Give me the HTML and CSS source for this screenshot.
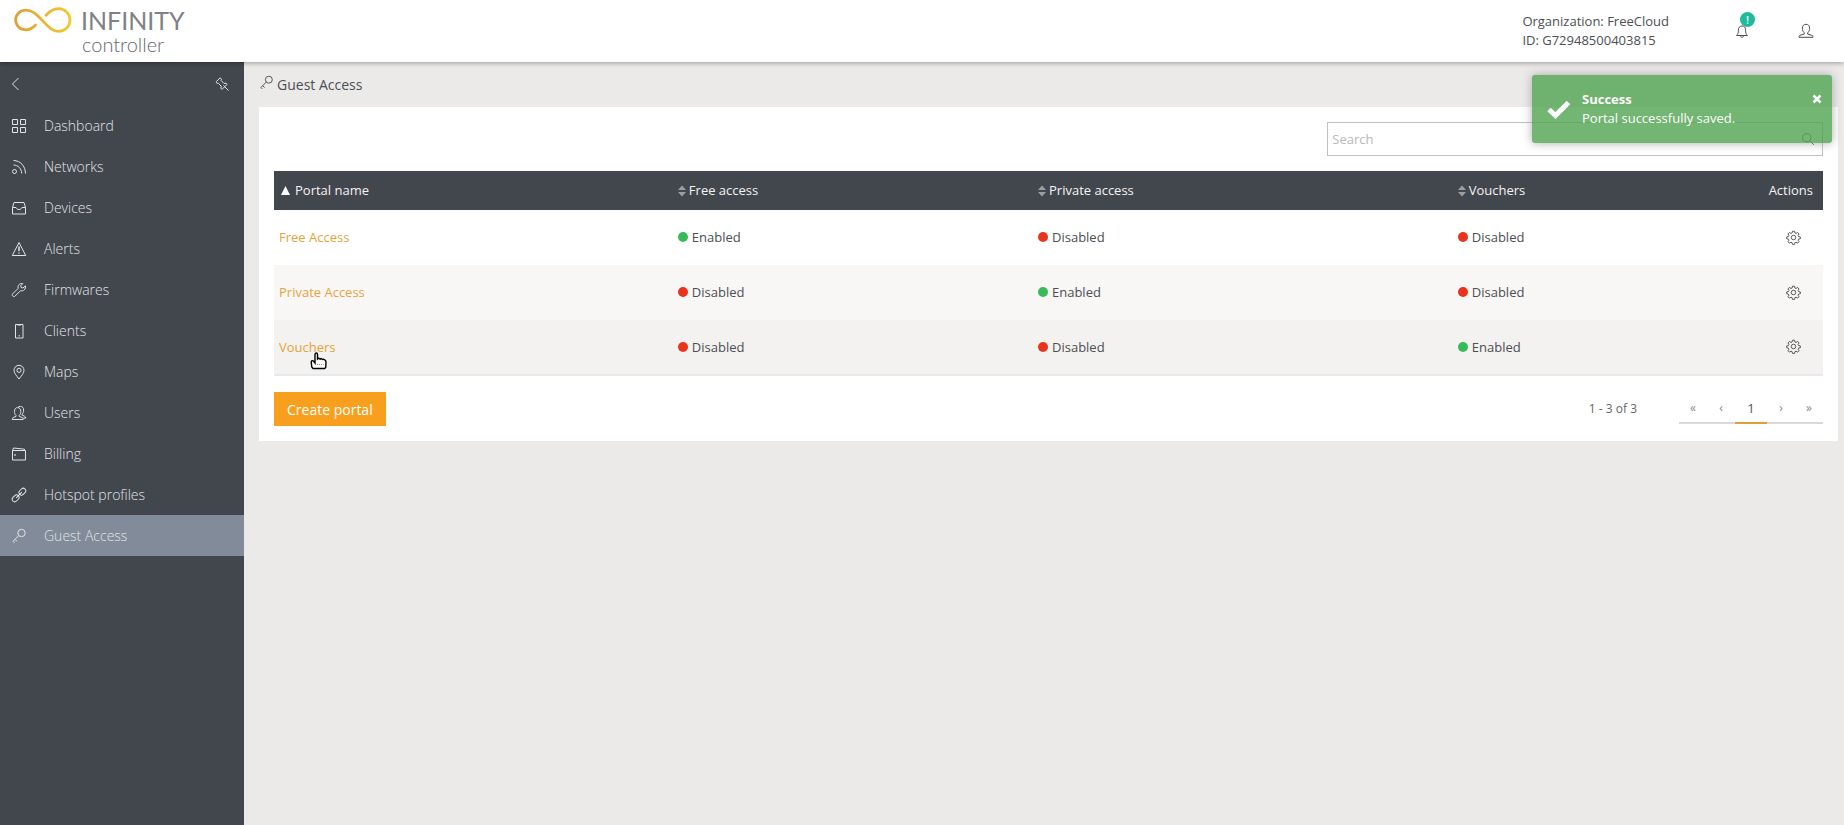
FILE: index.html
```html
<!DOCTYPE html>
<html lang="en">
<head>
<meta charset="utf-8">
<title>Infinity controller - Guest Access</title>
<link rel="stylesheet" href="styles.css">
</head>
<body>
<svg class="sprite" aria-hidden="true">
  <symbol id="key" viewBox="0 0 16 16"><circle cx="10.500" cy="5" r="3.700"/><path d="M7.800 7.600 1.800 13.500M4 11.400l2 2M2 13.300l1.500 1.500"/></symbol>
  <symbol id="gear" viewBox="0 0 16 16"><circle cx="8" cy="8" r="2.400"/><path d="M6.900 1.300h2.200l.4 1.900 1.200.5 1.700-1.100 1.500 1.600-1 1.600.5 1.200 1.900.4v1.900l-1.900.4-.5 1.200 1 1.600-1.500 1.500-1.700-1-1.200.5-.4 1.800H6.900l-.4-1.800-1.200-.5-1.700 1-1.500-1.500 1-1.600-.5-1.200-1.900-.4V7.400l1.900-.4.5-1.200-1-1.600 1.500-1.600 1.700 1.100 1.200-.5z"/></symbol>
  <symbol id="sort" viewBox="0 0 8 12"><path d="M4 0.500 8 5H0zM0 7h8L4 11.500z"/></symbol>
</svg>
<header class="topbar">
  <a class="logo" href="#" aria-label="Infinity controller">
    <svg class="logo-mark" viewBox="0 0 58 27"><defs><linearGradient id="gold" x1="0" x2="1" y1="0" y2="0"><stop offset="0" stop-color="#dda03c"/><stop offset="1" stop-color="#f2c92f"/></linearGradient></defs><path d="M21.500 18C18 21.800 15.500 22.800 12 22.800C6 22.800 1.700 18.500 1.700 13C1.700 7.500 6 3.200 12 3.200C18 3.200 22 7 26.500 11.500C33 18 37.500 24.300 44.500 24.300C51 24.300 56 19.500 56 12.800C56 6.500 51 1.700 44.500 1.700C39 1.700 35.500 4.500 32 8.200" fill="none" stroke="url(#gold)" stroke-width="2.800" stroke-linecap="round"/></svg>
    <span class="logo-text"><span class="logo-name">INFINITY</span><span class="logo-sub">controller</span></span>
  </a>
  <div class="account">
    <div class="org"><div>Organization: FreeCloud</div><div>ID: G72948500403815</div></div>
    <button class="icon-button bell" aria-label="Notifications">
      <svg class="icon" viewBox="0 0 16 16"><path d="M2.500 12.500c1.600-1.400 1.900-3 1.900-5.300C4.400 4.500 5.800 3 8 3s3.600 1.500 3.600 4.200c0 2.300.3 3.900 1.900 5.300zM6.500 12.700c0 2.300 3 2.300 3 0"/></svg>
      <span class="badge">!</span>
    </button>
    <button class="icon-button" aria-label="Profile">
      <svg class="icon" viewBox="0 0 16 16"><path d="M6.300 9.800C4.900 8.700 4.400 7.100 4.400 5.200 4.400 2.700 5.800 1.300 8 1.300s3.600 1.400 3.600 3.900c0 1.900-.5 3.500-1.900 4.600v1.300l4.200 1.200c.8.300 1.100.8 1.100 2H1c0-1.200.3-1.700 1.100-2l4.200-1.200z"/></svg>
    </button>
  </div>
</header>
<div class="layout">
  <aside class="sidebar">
    <div class="sidebar-tools">
      <button class="tool" aria-label="Collapse menu"><svg class="icon" viewBox="0 0 16 16"><path d="M10.500 2 4.500 8l6 6"/></svg></button>
      <button class="tool" aria-label="Unpin menu"><svg class="icon" viewBox="0 0 16 16"><path d="M2.200 5.700 6.200 1.800 7.500 3.300 7 4.500l3 3 2-.4 1 1.300-5 5-1.200-1.200.5-2-3-3-1 .3zM9.500 9.500l5 5"/></svg></button>
    </div>
    <nav class="nav">
      <a href="#"><svg class="icon" viewBox="0 0 16 16"><path d="M1.500 1.500h5v5h-5zM9.500 1.500h5v5h-5zM1.500 9.500h5v5h-5zM9.500 9.500h5v5h-5z"/></svg>Dashboard</a>
      <a href="#"><svg class="icon" viewBox="0 0 16 16"><circle cx="3.500" cy="12.500" r="2"/><path d="M2.500 6c4.800.2 8 3.600 8.200 8.500M2.500 1.500c7 .2 11.800 5.500 12 13"/></svg>Networks</a>
      <a href="#"><svg class="icon" viewBox="0 0 16 16"><path d="M1.500 7.500 3 2.500h10l1.500 5v6.500h-13zM1.500 7.500H5c.5 1.300 1.600 2 3 2s2.500-.7 3-2h3.500"/></svg>Devices</a>
      <a href="#"><svg class="icon" viewBox="0 0 16 16"><path d="M8 1.500 14.700 14.500H1.300zM8 5.500v4.800M8 11.500v1.500"/><path d="M8 5.500v4.500"/></svg>Alerts</a>
      <a href="#"><svg class="icon" viewBox="0 0 16 16"><path d="M11.800 1.600c-1.900-.4-3.600.3-4.400 1.800-.5 1-.5 2-.2 2.900L1.700 11.800c-.7.8-.6 1.700 0 2.300.7.700 1.600.7 2.300 0l5.600-5.400c1.300.4 2.700.2 3.700-.8 1.100-1.100 1.400-2.500 1-4L12 6l-1.900-.4-.4-1.800z"/></svg>Firmwares</a>
      <a href="#"><svg class="icon" viewBox="0 0 16 16"><path d="M4.500 1.500h7.500v13.500H4.500zM6.500 2h3.500M7.500 12.800h1.500"/></svg>Clients</a>
      <a href="#"><svg class="icon" viewBox="0 0 16 16"><path d="M8 15C5.500 11.800 3 9 3 6.300 3 3.500 5.200 1.300 8 1.300s5 2.200 5 5C13 9 10.500 11.800 8 15z"/><circle cx="8" cy="6.300" r="2.100"/></svg>Maps</a>
      <a href="#"><svg class="icon" viewBox="0 0 16 16"><path d="M5 10.400C3.900 9.500 3.500 8.200 3.500 6.400 3.500 4 4.600 2.600 6.600 2.600s3.200 1.400 3.200 3.800c0 1.800-.5 3.100-1.600 4v1l3 1.200c.8.300 1 .9 1 1.900H1.200c0-1 .2-1.600.9-1.900L5 11.400zM7 2.300c.6-.6 1.400-.9 2.400-.9 2.100 0 3.200 1.400 3.200 3.700 0 1.800-.5 3.200-1.500 4v1l2.600 1.200c.8.400 1 .9 1 1.800h-2.400"/></svg>Users</a>
      <a href="#"><svg class="icon" viewBox="0 0 16 16"><path d="M1.500 4.500h13v9.500h-13zM1.500 4.500l1-2.500 11 1.200v1.300"/><circle cx="4" cy="9" r=".5"/></svg>Billing</a>
      <a href="#"><svg class="icon" viewBox="0 0 16 16"><g transform="rotate(-45 8 8)"><rect x="-.5" y="5.500" width="7.500" height="5" rx="2.500"/><rect x="9" y="5.500" width="7.500" height="5" rx="2.500"/><path d="M4 8h8"/></g></svg>Hotspot profiles</a>
      <a class="active" href="#" aria-current="page"><svg class="icon"><use href="#key"/></svg>Guest Access</a>
    </nav>
  </aside>
  <main class="content">
    <h1 class="page-title"><svg class="icon"><use href="#key"/></svg>Guest Access</h1>
    <section class="panel">
      <div class="search">
        <input type="search" placeholder="Search" aria-label="Search">
        <svg class="icon" viewBox="0 0 16 16"><circle cx="6.500" cy="6.500" r="4.700"/><path d="M10 10l4.800 4.800"/></svg>
      </div>
      <table class="portals">
        <colgroup><col class="col-name"><col class="col-free"><col class="col-private"><col class="col-vouchers"><col></colgroup>
        <thead><tr>
          <th class="sorted" scope="col" aria-sort="ascending"><svg class="ascending" viewBox="0 0 9 9"><path d="M4.500 0 9 9H0z"/></svg>Portal name</th>
          <th scope="col"><svg class="sort"><use href="#sort"/></svg>Free access</th>
          <th scope="col"><svg class="sort"><use href="#sort"/></svg>Private access</th>
          <th scope="col"><svg class="sort"><use href="#sort"/></svg>Vouchers</th>
          <th class="actions" scope="col">Actions</th>
        </tr></thead>
        <tbody>
          <tr><td><a href="#">Free Access</a></td><td><span class="dot on"></span>Enabled</td><td><span class="dot"></span>Disabled</td><td><span class="dot"></span>Disabled</td><td class="actions"><button class="gear" aria-label="Free Access actions"><svg class="icon"><use href="#gear"/></svg></button></td></tr>
          <tr><td><a href="#">Private Access</a></td><td><span class="dot"></span>Disabled</td><td><span class="dot on"></span>Enabled</td><td><span class="dot"></span>Disabled</td><td class="actions"><button class="gear" aria-label="Private Access actions"><svg class="icon"><use href="#gear"/></svg></button></td></tr>
          <tr class="hovered"><td><a class="pointed" href="#">Vouchers<svg class="cursor" viewBox="0 0 18 18"><path d="M5 2.500c0-2 2.500-2 2.500 0V7l1-.8 1.700.9.900-.5 1.600.9.900-.3 1.900 1.300.5 1.500-.3 5.500-1 1H3l-1.200-1.500L1.200 10c.2-1.700 1.600-1.700 2.400-.7L5 11z"/><path class="cursor-lines" d="M5 12.500h8.500"/></svg></a></td><td><span class="dot"></span>Disabled</td><td><span class="dot"></span>Disabled</td><td><span class="dot on"></span>Enabled</td><td class="actions"><button class="gear" aria-label="Vouchers actions"><svg class="icon"><use href="#gear"/></svg></button></td></tr>
        </tbody>
      </table>
      <div class="panel-footer">
        <button class="create">Create portal</button>
        <div class="paging">
          <span>1 - 3 of 3</span>
          <nav class="pages" aria-label="Pages"><a href="#">«</a><a href="#">‹</a><a class="current" href="#">1</a><a href="#">›</a><a href="#">»</a></nav>
        </div>
      </div>
    </section>
  </main>
</div>
<div class="toast" role="status">
  <svg class="check" viewBox="0 0 26 20"><path d="M3 10.500 9.500 16.500 22.500 3.500"/></svg>
  <div class="toast-text"><strong>Success</strong><div>Portal successfully saved.</div></div>
  <button class="close" aria-label="Close"><svg viewBox="0 0 10 10"><path d="M1.500 1.500l7 7M8.500 1.500l-7 7"/></svg></button>
</div>
</body>
</html>
```
FILE: styles.css
```css
* { box-sizing: border-box; }

body {
  margin: 0;
  min-height: 100vh;
  display: flex;
  flex-direction: column;
  background: #ebeae9;
  color: #4b4e53;
  font: 13px/19px "Open Sans", sans-serif;
}

button {
  padding: 0;
  border: 0;
  background: none;
  color: inherit;
  font: inherit;
}

a { text-decoration: none; }

.sprite { position: absolute; width: 0; height: 0; }

.icon {
  display: block;
  flex: none;
  width: 16px;
  height: 16px;
  fill: none;
  stroke: currentColor;
  stroke-width: 1;
}

.topbar {
  position: relative;
  z-index: 1;
  display: flex;
  justify-content: space-between;
  height: 62px;
  padding: 0 24px 0 14px;
  background: #fff;
  box-shadow: 0 1px 5px rgba(0, 0, 0, .35);
}

.logo { display: flex; gap: 9px; padding-top: 7px; color: #808185; }
.logo-mark { width: 58px; height: 27px; }
.logo-text { display: flex; flex-direction: column; font-family: Lato, sans-serif; }
.logo-name { font-size: 25px; line-height: 27px; }
.logo-sub { padding-left: 1px; font-size: 20px; line-height: 20px; font-weight: 300; color: #67686c; }

.account { display: flex; align-items: center; }
.org { margin-right: 59px; }
.icon-button { position: relative; width: 28px; height: 28px; display: grid; place-items: center; }
.bell { margin-right: 36px; }
.badge {
  position: absolute;
  top: -5px;
  right: 1px;
  width: 15px;
  height: 15px;
  border-radius: 50%;
  background: #1dbb9c;
  color: #fff;
  font-size: 11px;
  line-height: 15px;
  font-weight: 600;
}

.layout { flex: 1; display: flex; }

.sidebar { flex: none; width: 244px; background: #42464d; color: #e1e4e8; }
.sidebar-tools { display: flex; justify-content: space-between; align-items: center; height: 43px; padding: 0 14px 0 8px; }
.nav a {
  display: flex;
  align-items: center;
  gap: 17px;
  height: 41px;
  padding-left: 11px;
  color: inherit;
  font-size: 14px;
  font-weight: 300;
}
.nav .active { background: #828b99; }

.content { flex: 1; padding: 0 6px 0 15px; }
.page-title {
  display: flex;
  align-items: center;
  gap: 3px;
  height: 45px;
  margin: 0;
  font-size: 14px;
  font-weight: 400;
}
.page-title .icon { width: 15px; height: 15px; margin-bottom: 4px; }
.panel { padding: 15px; background: #fff; }

.search { position: relative; width: 32%; margin: 0 0 15px auto; }
.search input {
  display: block;
  width: 100%;
  height: 34px;
  padding: 0 32px 0 4px;
  border: 1px solid #c0c0c0;
  border-radius: 0;
  background: #fff;
  font: inherit;
}
.search input::placeholder { color: #b8b8b8; opacity: 1; }
.search .icon { position: absolute; top: 10px; right: 8px; width: 14px; height: 14px; }

.portals { width: 100%; table-layout: fixed; border-collapse: collapse; border-bottom: 2px solid #e9e9e9; }
.col-name { width: 25.750%; }
.col-free { width: 23.250%; }
.col-private { width: 27.100%; }
.col-vouchers { width: 15%; }
.portals th { height: 39px; padding: 0 5px; background: #42464d; color: #f4f4f4; font-weight: 400; text-align: left; }
.portals td { height: 55px; padding: 0 5px; }
.portals a { color: #e9a33b; }
.portals tr:nth-child(2) td { background: #f8f7f6; }
.portals .hovered td { background: #f3f2f1; }
.portals th.sorted { padding-left: 7px; }
.portals th.actions { padding-right: 10px; text-align: right; }
.portals td.actions { padding-right: 22px; padding-bottom: 3px; text-align: right; }
.ascending { width: 9px; height: 9px; margin-right: 5px; fill: #fff; }
.sort { width: 8px; height: 12px; margin-right: 3px; fill: #9c9fa2; vertical-align: -2px; }
.dot { display: inline-block; width: 10px; height: 10px; margin-right: 4px; border-radius: 50%; background: #e8341c; }
.dot.on { background: #37bb58; }
.gear { display: inline-block; vertical-align: middle; }
.gear .icon { width: 15px; height: 15px; }

.pointed { position: relative; }
.cursor { position: absolute; left: 31px; top: 14px; width: 18px; height: 18px; fill: #fff; stroke: #000; stroke-width: 1.4; }
.cursor .cursor-lines { stroke: #888; stroke-width: 1; stroke-dasharray: 1 1; }

.panel-footer { display: flex; justify-content: space-between; align-items: flex-start; padding-top: 16px; }
.create { height: 34px; padding: 0 13px; background: #f89f1e; color: #fff; font-size: 14px; }
.paging { display: flex; align-items: center; gap: 42px; color: #666; font-size: 12px; }
.pages { display: flex; }
.pages a { width: 28px; height: 32px; border-bottom: 2px solid #d9d9d9; color: #8a8a8a; line-height: 32px; text-align: center; }
.pages .current { width: 32px; border-color: #e0a03c; color: #555; font-size: 13px; }

.toast {
  position: absolute;
  z-index: 2;
  top: 75px;
  right: 12px;
  display: flex;
  align-items: center;
  width: 300px;
  padding: 15px 10px 15px 14px;
  border-radius: 3px;
  background: #51a351;
  box-shadow: 0 0 10px #999;
  color: #fff;
  opacity: .8;
}
.check { width: 26px; height: 20px; margin-right: 10px; fill: none; stroke: #fff; stroke-width: 5; }
.toast-text { flex: 1; }
.toast strong { display: block; }
.close { align-self: flex-start; margin-top: 4px; }
.close svg { display: block; width: 10px; height: 10px; stroke: #fff; stroke-width: 2.500; }
```
